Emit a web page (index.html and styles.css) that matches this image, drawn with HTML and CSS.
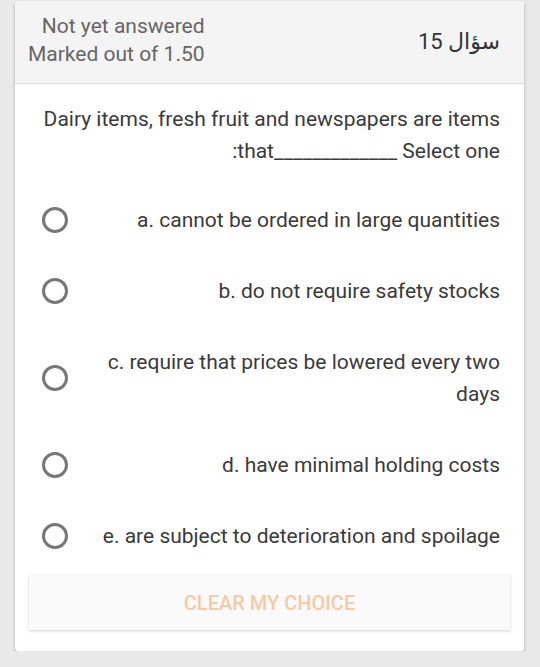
FILE: index.html
```html
<!DOCTYPE html>
<html lang="en">
<head>
    <meta charset="UTF-8">
    <meta name="viewport" content="width=device-width, initial-scale=1.0">
    <title>Question 15</title>
    <link rel="stylesheet" href="styles.css">
</head>
<body>
    <div class="card">
        <div class="card-header">
            <div class="state">
                <div>Not yet answered</div>
                <div>Marked out of 1.50</div>
            </div>
            <div class="qno" dir="rtl">سؤال 15</div>
        </div>

        <div class="card-body">
            <p class="qtext">Dairy items, fresh fruit and newspapers are items<br>:that_____________ Select one</p>

            <div class="answers">
                <label class="answer">
                    <span class="radio"></span>
                    <span class="answer-text">a. cannot be ordered in large quantities</span>
                </label>
                <label class="answer">
                    <span class="radio"></span>
                    <span class="answer-text">b. do not require safety stocks</span>
                </label>
                <label class="answer">
                    <span class="radio"></span>
                    <span class="answer-text">c. require that prices be lowered every two<br>days</span>
                </label>
                <label class="answer">
                    <span class="radio"></span>
                    <span class="answer-text">d. have minimal holding costs</span>
                </label>
                <label class="answer">
                    <span class="radio"></span>
                    <span class="answer-text">e. are subject to deterioration and spoilage</span>
                </label>
            </div>
        </div>

        <div class="card-footer">
            <button class="clear-btn">CLEAR MY CHOICE</button>
        </div>
    </div>
</body>
</html>
```

FILE: styles.css
```css
body {
    margin: 0;
    background: #e9e9e9;
    font-family: Roboto, "Noto Sans", sans-serif;
    color: #3a3a3a;
}

.card {
    margin: 1px 16px 0 15px;
    background: #fff;
    border-radius: 3px;
    box-shadow: 0 2px 3px rgba(0,0,0,0.3);
    padding-bottom: 21px;
}

.card-header {
    display: flex;
    justify-content: space-between;
    align-items: center;
    height: 82px;
    padding: 0 24px 0 13px;
    background: #f4f4f4;
    border-bottom: 1px solid #dedede;
    border-radius: 3px 3px 0 0;
}

.state {
    margin-top: -4px;
    text-align: right;
    font-size: 21px;
    line-height: 28px;
    color: #666;
}

.qno {
    margin-top: -2px;
    font-size: 22px;
    color: #333;
    font-family: Roboto, "DejaVu Sans", sans-serif;
}

.card-body {
    padding: 19px 24px 0 27px;
}

.qtext {
    margin: 0 0 17px 0;
    text-align: right;
    font-size: 21px;
    line-height: 32px;
}

.answer {
    display: flex;
    align-items: center;
    justify-content: space-between;
    padding: 19.5px 0;
    font-size: 21px;
    line-height: 32px;
}

.radio {
    flex: none;
    width: 20px;
    height: 20px;
    border: 3px solid #777;
    border-radius: 50%;
}

.answer-text {
    text-align: right;
}

.card-footer {
    padding: 4px 14px 0 14px;
}

.clear-btn {
    display: block;
    width: 100%;
    height: 55px;
    border: none;
    background: #fafafa;
    box-shadow: 0 1px 3px rgba(0,0,0,0.18);
    font-family: Roboto, sans-serif;
    font-size: 20px;
    font-weight: 500;
    color: #f5cba6;
}
```
